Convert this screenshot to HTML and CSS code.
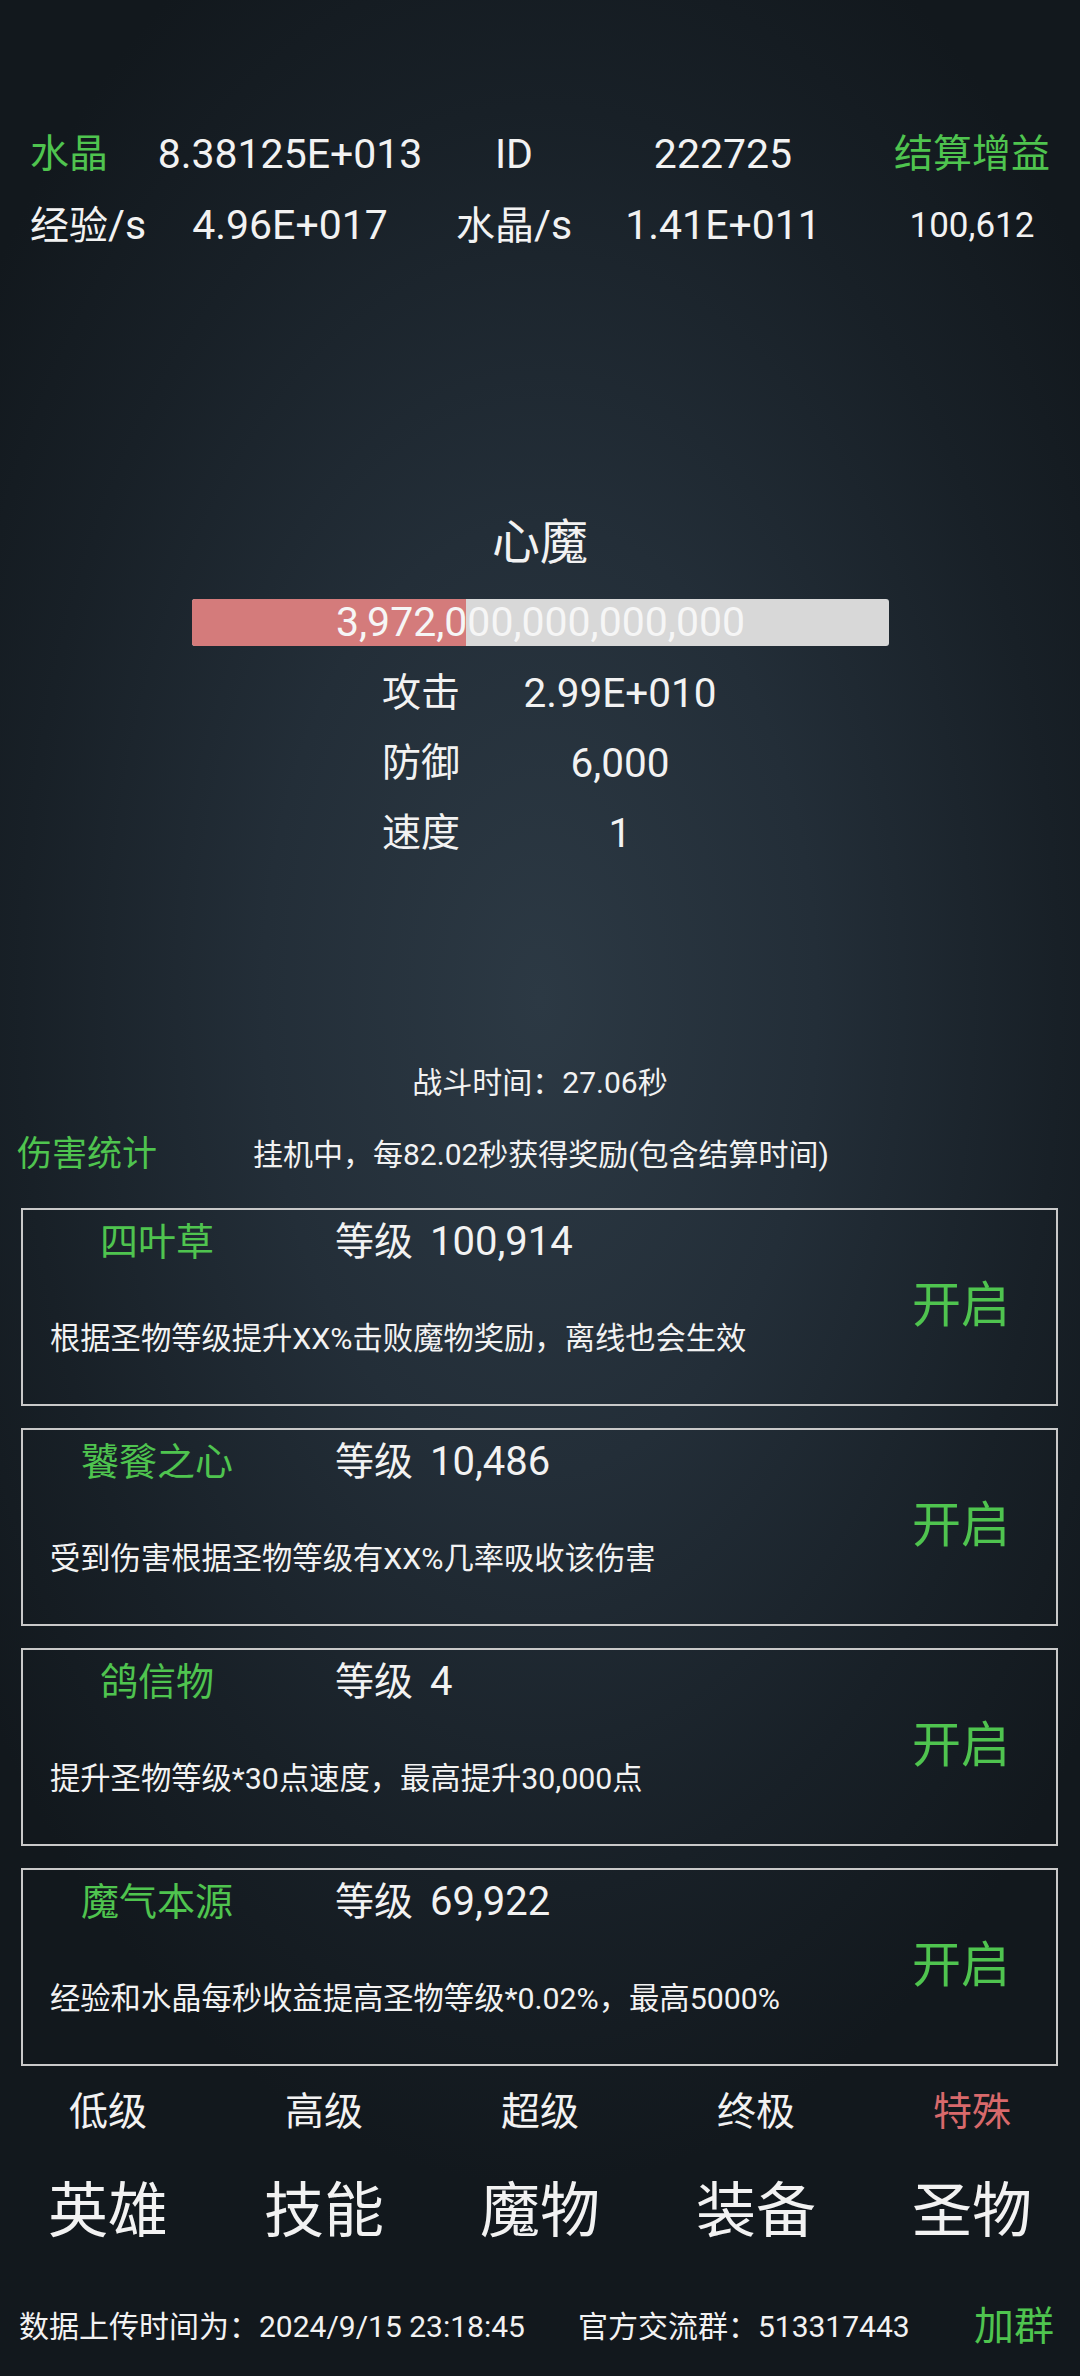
FILE: index.html
```html
<!DOCTYPE html>
<html lang="zh-CN">
<head>
<meta charset="utf-8">
<title>心魔</title>
<link rel="stylesheet" href="styles.css">
</head>
<body>
<div class="page">
  <section class="summary">
    <div class="cell c1 green">水晶</div>
    <div class="cell c2 num">8.38125E+013</div>
    <div class="cell c3 num">ID</div>
    <div class="cell c4 num">222725</div>
    <div class="cell c5 green">结算增益</div>
    <div class="cell c1"><span>经验<span class="num">/s</span></span></div>
    <div class="cell c2 num">4.96E+017</div>
    <div class="cell c3"><span>水晶<span class="num">/s</span></span></div>
    <div class="cell c4 num">1.41E+011</div>
    <div class="cell c5 small">100,612</div>
  </section>

  <section class="monster">
    <div class="monster-name">心魔</div>
    <div class="hpbar">
      <div class="hpfill" style="width: 39.3%"></div>
      <div class="hptext">3,972,000,000,000,000</div>
    </div>
    <div class="stats">
      <div class="stat-label">攻击</div><div class="stat-value">2.99E+010</div>
      <div class="stat-label">防御</div><div class="stat-value">6,000</div>
      <div class="stat-label">速度</div><div class="stat-value">1</div>
    </div>
  </section>

  <div class="battle-time">战斗时间：27.06秒</div>
  <div class="damage-row">
    <span class="green damage-title">伤害统计</span>
    <span class="idle">挂机中，每82.02秒获得奖励(包含结算时间)</span>
  </div>

  <section class="cards">
    <div class="card">
      <div class="card-main">
        <div class="card-head"><span class="card-name green">四叶草</span><span class="card-level">等级</span><span class="card-num">100,914</span></div>
        <div class="card-desc">根据圣物等级提升XX%击败魔物奖励，离线也会生效</div>
      </div>
      <div class="card-toggle green">开启</div>
    </div>
    <div class="card">
      <div class="card-main">
        <div class="card-head"><span class="card-name green">饕餮之心</span><span class="card-level">等级</span><span class="card-num">10,486</span></div>
        <div class="card-desc">受到伤害根据圣物等级有XX%几率吸收该伤害</div>
      </div>
      <div class="card-toggle green">开启</div>
    </div>
    <div class="card">
      <div class="card-main">
        <div class="card-head"><span class="card-name green">鸽信物</span><span class="card-level">等级</span><span class="card-num">4</span></div>
        <div class="card-desc">提升圣物等级*30点速度，最高提升30,000点</div>
      </div>
      <div class="card-toggle green">开启</div>
    </div>
    <div class="card">
      <div class="card-main">
        <div class="card-head"><span class="card-name green">魔气本源</span><span class="card-level">等级</span><span class="card-num">69,922</span></div>
        <div class="card-desc">经验和水晶每秒收益提高圣物等级*0.02%，最高5000%</div>
      </div>
      <div class="card-toggle green">开启</div>
    </div>
  </section>

  <nav class="tiers">
    <div>低级</div><div>高级</div><div>超级</div><div>终极</div><div class="red">特殊</div>
  </nav>
  <nav class="tabs">
    <div>英雄</div><div>技能</div><div>魔物</div><div>装备</div><div>圣物</div>
  </nav>

  <footer class="footer">
    <span>数据上传时间为：2024/9/15 23:18:45</span>
    <span class="group">官方交流群：513317443</span>
    <span class="join green">加群</span>
  </footer>
</div>
</body>
</html>
```

FILE: styles.css
```css
html, body {
  margin: 0;
  padding: 0;
}
body {
  width: 1080px;
  height: 2376px;
  overflow: hidden;
  background-color: #151c22;
  background-image: radial-gradient(ellipse 64% 50% at 50% 42%, #2c3944 0%, #232e38 40%, #182027 75%, #12181d 100%);
  color: #f2f2f2;
  font-family: Roboto, "Noto Sans CJK SC", sans-serif;
}
.page {
  width: 1080px;
  height: 2376px;
  display: flex;
  flex-direction: column;
}
.green { color: #4fc44f; }
.red { color: #d8696b; }

.summary {
  padding-top: 119px;
  display: grid;
  grid-template-columns: 180px 220px 228px 190px 262px;
  grid-auto-rows: 71px;
  font-size: 39px;
}
.cell {
  display: flex;
  justify-content: center;
  align-items: center;
  line-height: 71px;
  white-space: nowrap;
  min-width: 0;
}
.num { font-size: 41px; }
.c1 { justify-content: flex-start; padding-left: 30px; }
.c5 { padding-left: 46px; }
.small { font-size: 35px; }

.monster {
  margin-top: 252px;
  display: flex;
  flex-direction: column;
  align-items: center;
}
.monster-name {
  font-size: 48px;
  line-height: 60px;
}
.hpbar {
  position: relative;
  margin-top: 26px;
  width: 697px;
  height: 47px;
  border-radius: 3px;
  background: #d8d8d8;
  overflow: hidden;
  margin-left: 1px;
}
.hpfill {
  height: 100%;
  background: #d47b7b;
}
.hptext {
  position: absolute;
  inset: 0;
  text-align: center;
  line-height: 47px;
  font-size: 41px;
  color: #f6f6f6;
}
.stats {
  margin-top: 12px;
  display: grid;
  grid-template-columns: 160px 238px;
  grid-auto-rows: 70px;
  font-size: 39px;
  line-height: 70px;
  text-align: center;
}
.stat-value { font-size: 40.5px; }

.battle-time {
  margin-top: 195px;
  text-align: center;
  font-size: 30px;
  line-height: 40px;
}
.damage-row {
  margin-top: 27px;
  display: flex;
  align-items: center;
  line-height: 50px;
  padding-left: 17px;
}
.damage-title {
  font-size: 35px;
  width: 236px;
}
.idle {
  font-size: 30px;
}

.cards {
  margin-top: 28px;
  display: flex;
  flex-direction: column;
  gap: 22px;
  padding: 0 22px 0 21px;
}
.card {
  height: 198px;
  box-sizing: border-box;
  border: 2px solid #c9c9c9;
  display: grid;
  grid-template-columns: 1fr 190px;
}
.card-head {
  display: flex;
  align-items: center;
  height: 64px;
  line-height: 64px;
}
.card-name {
  width: 268px;
  text-align: center;
  font-size: 38px;
}
.card-level {
  margin-left: 44px;
  font-size: 39px;
}
.card-num {
  margin-left: 17px;
  font-size: 40px;
}
.card-desc {
  margin-top: 45px;
  padding-left: 27px;
  font-size: 30.3px;
  line-height: 40px;
  white-space: nowrap;
}
.card-toggle {
  align-self: center;
  text-align: center;
  font-size: 49px;
  line-height: 60px;
  margin-top: -2px;
}

.tiers {
  margin-top: 18px;
  display: grid;
  grid-template-columns: repeat(5, 1fr);
  text-align: center;
  font-size: 39px;
  line-height: 56px;
}
.tabs {
  margin-top: 32px;
  display: grid;
  grid-template-columns: repeat(5, 1fr);
  text-align: center;
  font-size: 60px;
  line-height: 80px;
}

.footer {
  margin-top: 50px;
  display: flex;
  align-items: center;
  line-height: 50px;
  font-size: 30px;
  padding: 0 26px 0 19px;
  white-space: nowrap;
}
.group {
  margin-left: 53px;
}
.join {
  margin-left: auto;
  font-size: 40px;
}
```
